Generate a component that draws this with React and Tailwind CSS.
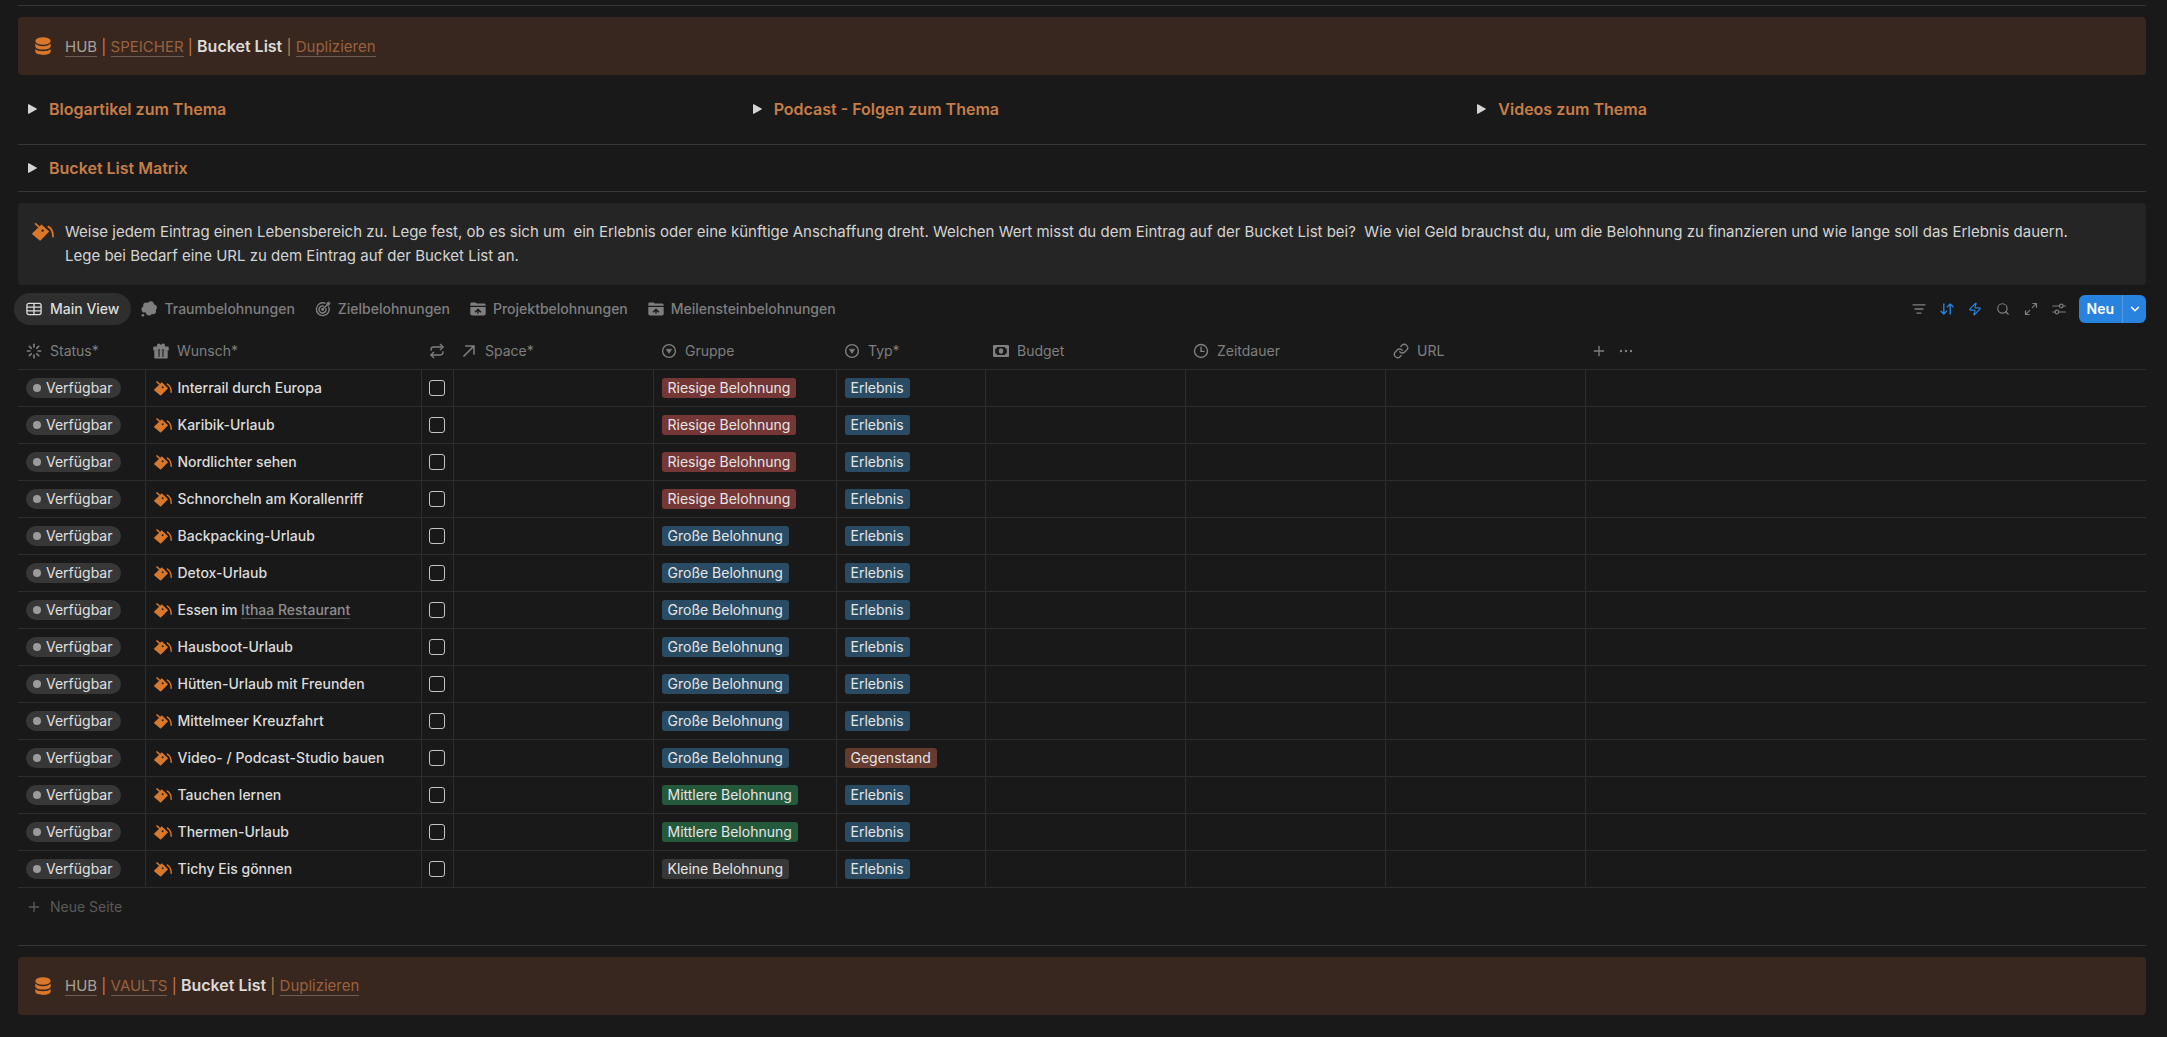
import { Search, Zap, Plus, ChevronDown, Repeat, Link, Loader } from 'lucide-react';

const groupColors = {
  'Riesige Belohnung': 'bg-[#743736]',
  'Große Belohnung': 'bg-[#294c64]',
  'Mittlere Belohnung': 'bg-[#25593c]',
  'Kleine Belohnung': 'bg-[#373737]',
};

const typeColors = {
  Erlebnis: 'bg-[#294c64]',
  Gegenstand: 'bg-[#643b2e]',
};

const wishes = [
  { name: 'Interrail durch Europa', group: 'Riesige Belohnung', type: 'Erlebnis' },
  { name: 'Karibik-Urlaub', group: 'Riesige Belohnung', type: 'Erlebnis' },
  { name: 'Nordlichter sehen', group: 'Riesige Belohnung', type: 'Erlebnis' },
  { name: 'Schnorcheln am Korallenriff', group: 'Riesige Belohnung', type: 'Erlebnis' },
  { name: 'Backpacking-Urlaub', group: 'Große Belohnung', type: 'Erlebnis' },
  { name: 'Detox-Urlaub', group: 'Große Belohnung', type: 'Erlebnis' },
  { name: 'Essen im ', link: 'Ithaa Restaurant', group: 'Große Belohnung', type: 'Erlebnis' },
  { name: 'Hausboot-Urlaub', group: 'Große Belohnung', type: 'Erlebnis' },
  { name: 'Hütten-Urlaub mit Freunden', group: 'Große Belohnung', type: 'Erlebnis' },
  { name: 'Mittelmeer Kreuzfahrt', group: 'Große Belohnung', type: 'Erlebnis' },
  { name: 'Video- / Podcast-Studio bauen', group: 'Große Belohnung', type: 'Gegenstand' },
  { name: 'Tauchen lernen', group: 'Mittlere Belohnung', type: 'Erlebnis' },
  { name: 'Thermen-Urlaub', group: 'Mittlere Belohnung', type: 'Erlebnis' },
  { name: 'Tichy Eis gönnen', group: 'Kleine Belohnung', type: 'Erlebnis' },
];

function DatabaseIcon() {
  return (
    <svg viewBox="0 0 16 18" className="w-4 h-[18px] shrink-0" fill="#d9772b" aria-hidden="true">
      <ellipse cx="8" cy="4" rx="7.7" ry="3.8" />
      <path d="M.3 6.6C1.6 8.3 4.6 9.2 8 9.2s6.4-.9 7.7-2.6v2.6c0 1.9-3.4 3.4-7.7 3.4S.3 11.1.3 9.2z" />
      <path d="M.3 12C1.6 13.7 4.6 14.2 8 14.2s6.4-.5 7.7-2.2v2.6c0 1.9-3.4 3.4-7.7 3.4S.3 16.5.3 14.6z" />
    </svg>
  );
}

function BucketIcon({ className }) {
  return (
    <svg viewBox="0 0 22 18" className={className} fill="none" aria-hidden="true">
      <path d="M9.5 1.4 17.2 8.6 8.8 17.3a1 1 0 0 1-1.4 0L.5 11.4a1 1 0 0 1 0-1.4z" fill="#d9772b" />
      <path d="M3.6.9 6.6 3.6M16.4 3.6c2.8 1.6 4.6 5 4.6 10" stroke="#d9772b" strokeWidth="1.8" strokeLinecap="round" />
      <circle cx="10.6" cy="7.6" r="1.2" fill="#222" />
    </svg>
  );
}

function TableIcon() {
  return (
    <svg viewBox="0 0 16 16" className="size-4" fill="none" stroke="currentColor" strokeWidth="1.3" aria-hidden="true">
      <rect x=".9" y="2.4" width="14.2" height="11.2" rx="2" />
      <path d="M1 6.100h14M1 9.900h14M8 2.500v11" />
    </svg>
  );
}

function ThoughtIcon() {
  return (
    <svg viewBox="0 0 16 16" className="size-4" fill="currentColor" aria-hidden="true">
      <circle cx="8.6" cy="7" r="5.2" />
      <circle cx="5.2" cy="4.4" r="3" />
      <circle cx="9.8" cy="3.3" r="3" />
      <circle cx="12.8" cy="6.6" r="3" />
      <circle cx="12" cy="10.2" r="3" />
      <circle cx="8" cy="11.4" r="3" />
      <circle cx="3.6" cy="8.4" r="3.1" />
      <circle cx="1.9" cy="14.3" r="1.3" />
    </svg>
  );
}

function TargetIcon() {
  return (
    <svg viewBox="0 0 16 16" className="size-4" fill="none" stroke="currentColor" strokeWidth="1.4" strokeLinecap="round" aria-hidden="true">
      <path d="M10 2.200A6.400 6.400 0 1 0 13.800 6" />
      <path d="M8.400 5.100A3.500 3.500 0 1 0 10.900 7.600" />
      <path d="M7.500 8.500 12.300 3.700" />
      <circle cx="7.500" cy="8.500" r=".7" fill="currentColor" />
      <path d="M12 4V2L14 .8v1.200h1.200L14 4z" fill="currentColor" strokeWidth=".8" strokeLinejoin="round" />
    </svg>
  );
}

function FolderIcon() {
  return (
    <svg viewBox="0 0 16 16" className="size-4" aria-hidden="true">
      <path d="M.3 4.800V3c0-1 .6-1.600 1.600-1.600h3.200c.5 0 .8.200 1.100.5l.6.600h7.200c1 0 1.700.6 1.700 1.600v.7z" fill="currentColor" />
      <path d="M.3 6h15.400v6.600c0 1.200-.7 1.900-1.900 1.900H2.200C1 14.500.3 13.800.3 12.600z" fill="currentColor" />
      <path d="M5 11.300 8 8.400l3 2.900M8 9.500v3.200" fill="none" stroke="#191919" strokeWidth="1.4" />
    </svg>
  );
}

function GiftIcon() {
  return (
    <svg viewBox="0 0 16 16" className="size-4" fill="currentColor" aria-hidden="true">
      <path d="M1 3.400h3.200C3.600 1.800 4.400.5 5.700.5c1 0 1.800.7 2.300 1.800C8.500 1.200 9.300.5 10.300.5c1.300 0 2.100 1.300 1.500 2.900H15c.4 0 .7.3.7.7v3.300H.3V4.100c0-.4.3-.7.7-.7z" />
      <path d="M1.300 7.300h13.400v7.300c0 .6-.4 1-1 1H2.300c-.6 0-1-.4-1-1z" />
      <path d="M6 6v8M10 6v8" stroke="#191919" strokeWidth="1.1" />
    </svg>
  );
}

function ArrowIcon() {
  return (
    <svg viewBox="0 0 16 16" className="size-4" fill="none" stroke="currentColor" strokeWidth="1.5" aria-hidden="true">
      <path d="M2.500 13.500 12.600 3.400M4.200 3h8.800v8.800" />
    </svg>
  );
}

function SelectIcon() {
  return (
    <svg viewBox="0 0 16 16" className="size-4" fill="none" aria-hidden="true">
      <circle cx="8" cy="8" r="6.4" stroke="currentColor" strokeWidth="1.4" />
      <path d="M5.300 6.200h5.400L8 10.400z" fill="currentColor" stroke="currentColor" strokeWidth=".6" strokeLinejoin="round" />
    </svg>
  );
}

function MoneyIcon() {
  return (
    <svg viewBox="0 0 16 16" className="size-4" aria-hidden="true">
      <rect x="0" y="2" width="16" height="12" rx="1" fill="currentColor" />
      <path d="M4 4h8c0 1 .8 1.800 1.800 1.800v4.400c-1 0-1.800.8-1.800 1.800H4c0-1-.8-1.800-1.800-1.800V5.800C3.200 5.800 4 5 4 4z" fill="#191919" />
      <ellipse cx="8" cy="8" rx="2.2" ry="2.7" fill="currentColor" />
    </svg>
  );
}

function ClockIcon() {
  return (
    <svg viewBox="0 0 16 16" className="size-4" fill="none" stroke="currentColor" strokeWidth="1.4" strokeLinecap="round" aria-hidden="true">
      <circle cx="8" cy="8" r="6.5" />
      <path d="M8 4.300V8.400h3" />
    </svg>
  );
}

function FilterIcon() {
  return (
    <svg viewBox="0 0 16 16" className="size-4" fill="none" stroke="currentColor" strokeWidth="1.3" strokeLinecap="round" aria-hidden="true">
      <path d="M2 3.800h12M4 8h8M6 12.200h4" />
    </svg>
  );
}

function SortIcon() {
  return (
    <svg viewBox="0 0 16 16" className="size-4" fill="none" stroke="currentColor" strokeWidth="1.4" strokeLinecap="round" strokeLinejoin="round" aria-hidden="true">
      <path d="M4.800 3v10M2 10.300 4.800 13l2.800-2.700M11.200 13V3M8.400 5.700 11.200 3 14 5.700" />
    </svg>
  );
}

function ExpandIcon() {
  return (
    <svg viewBox="0 0 16 16" className="size-4" fill="none" stroke="currentColor" strokeWidth="1.2" strokeLinecap="round" strokeLinejoin="round" aria-hidden="true">
      <path d="M9.300 6.700 13.400 2.600M9.800 2.500h3.700v3.700M6.700 9.300l-4.100 4.100M2.500 9.800v3.700h3.700" />
    </svg>
  );
}

function SlidersIcon() {
  return (
    <svg viewBox="0 0 16 16" className="size-4" fill="none" stroke="currentColor" strokeWidth="1.2" strokeLinecap="round" aria-hidden="true">
      <path d="M1.800 5h6.600M12.200 5h2.200M1.800 11h2.200M7.800 11h6.600" />
      <circle cx="10.3" cy="5" r="1.8" />
      <circle cx="5.9" cy="11" r="1.8" />
    </svg>
  );
}

function Divider() {
  return <hr className="border-t border-[#373737]" />;
}

function Breadcrumb({ section }) {
  return (
    <nav className="my-[11px] flex h-[58px] items-center rounded bg-[#38271f] pl-[17px] text-[15px] leading-6 text-[#c77d48]">
      <DatabaseIcon />
      <p className="ml-[14px]">
        <a href="#hub" className="border-b border-[#6b5d56] text-[#a8a19d]">HUB</a>
        {' | '}
        <a href="#section" className="border-b border-[#6b5d56] text-[#99613c]">{section}</a>
        {' | '}
        <strong className="text-base font-semibold text-[#dedad7]">Bucket List</strong>
        {' | '}
        <a href="#duplizieren" className="border-b border-[#6b5d56] text-[#99613c]">Duplizieren</a>
      </p>
    </nav>
  );
}

function Toggle({ title }) {
  return (
    <button type="button" className="flex h-[30px] items-center gap-3 pl-[10px] text-base font-semibold text-[#c77d48]">
      <svg viewBox="0 0 9 10" className="w-[9px] h-[10px]" fill="#d4d4d4" aria-hidden="true">
        <path d="M0 .8v8.400c0 .5.400.8.900.5l7.600-4.200a.6.600 0 0 0 0-1L.9.300C.4 0 0 .3 0 .8z" />
      </svg>
      {title}
    </button>
  );
}

function Tab({ icon, label, active }) {
  return (
    <button
      type="button"
      className={`flex h-8 items-center rounded-full text-sm font-medium ${
        active ? 'gap-2 px-3 bg-[#2e2e2e] text-[#dcdcdc]' : 'gap-[7px] px-[10px] text-[#7f7f7f]'
      }`}
    >
      {icon}
      {label}
    </button>
  );
}

function ToolButton({ icon, label, active }) {
  return (
    <button
      type="button"
      aria-label={label}
      className={`flex size-7 items-center justify-center ${active ? 'text-[#2783de]' : 'text-[#7f7f7f]'}`}
    >
      {icon}
    </button>
  );
}

function HeaderCell({ icon, label }) {
  return (
    <th scope="col" className="p-0 pl-2 text-left font-normal">
      <span className="flex items-center gap-2">
        {icon}
        {label}
      </span>
    </th>
  );
}

function Tag({ color, children }) {
  return <span className={`flex h-5 w-fit items-center rounded-[3px] px-[6px] text-[#e6e6e6] ${color}`}>{children}</span>;
}

function WishRow({ wish }) {
  return (
    <tr className="h-[37px] border-b border-[#2d2d2d]">
      <td className="border-r border-[#2d2d2d] p-0 pl-2">
        <span className="flex h-5 w-fit items-center gap-[5px] rounded-full bg-[#373737] pl-[7px] pr-2 text-[#e0e0e0]">
          <span className="size-2 rounded-full bg-[#9b9b9b]" />
          Verfügbar
        </span>
      </td>
      <td className="border-r border-[#2d2d2d] p-0 pl-2">
        <span className="flex items-center gap-[6px] pt-px font-medium text-[#dcdcdc]">
          <BucketIcon className="w-[18px] h-[15px] shrink-0" />
          <span className="whitespace-pre">
            {wish.name}
            {wish.link && (
              <a href="#ithaa" className="border-b border-[#4c4c4c] text-[#8f8f8f]">{wish.link}</a>
            )}
          </span>
        </span>
      </td>
      <td className="border-r border-[#2d2d2d] p-0">
        <input
          type="checkbox"
          aria-label={`${wish.name} wiederholen`}
          className="mx-auto block size-4 appearance-none rounded-[3px] border border-[#c4c4c4]"
        />
      </td>
      <td className="border-r border-[#2d2d2d]" />
      <td className="border-r border-[#2d2d2d] p-0 pl-2">
        <Tag color={groupColors[wish.group]}>{wish.group}</Tag>
      </td>
      <td className="border-r border-[#2d2d2d] p-0 pl-2">
        <Tag color={typeColors[wish.type]}>{wish.type}</Tag>
      </td>
      <td className="border-r border-[#2d2d2d]" />
      <td className="border-r border-[#2d2d2d]" />
      <td className="border-r border-[#2d2d2d]" />
      <td />
    </tr>
  );
}

export default function App() {
  return (
    <div className="min-h-screen bg-[#191919] pt-[5px] pl-[18px] pr-[21px] font-['Inter',sans-serif] text-[#d4d4d4]">
      <Divider />
      <Breadcrumb section="SPEICHER" />

      <div className="grid grid-cols-3 gap-[46px] pt-2 pb-5">
        <Toggle title="Blogartikel zum Thema" />
        <Toggle title="Podcast - Folgen zum Thema" />
        <Toggle title="Videos zum Thema" />
      </div>
      <Divider />
      <div className="py-2">
        <Toggle title="Bucket List Matrix" />
      </div>
      <Divider />

      <section className="mt-[11px] flex gap-[11px] rounded bg-[#252525] py-[17px] pl-[14px] pr-4">
        <BucketIcon className="mt-[3px] w-[22px] h-[18px] shrink-0" />
        <p className="text-[15px] leading-6">
          Weise jedem Eintrag einen Lebensbereich zu. Lege fest, ob es sich um&nbsp; ein Erlebnis oder eine künftige Anschaffung dreht. Welchen Wert misst du dem Eintrag auf der Bucket List bei?&nbsp; Wie viel Geld brauchst du, um die Belohnung zu finanzieren und wie lange soll das Erlebnis dauern.
          <br />
          Lege bei Bedarf eine URL zu dem Eintrag auf der Bucket List an.
        </p>
      </section>

      <div className="mt-2 -ml-1 flex items-center justify-between">
        <div className="flex">
          <Tab active icon={<TableIcon />} label="Main View" />
          <Tab icon={<ThoughtIcon />} label="Traumbelohnungen" />
          <Tab icon={<TargetIcon />} label="Zielbelohnungen" />
          <Tab icon={<FolderIcon />} label="Projektbelohnungen" />
          <Tab icon={<FolderIcon />} label="Meilensteinbelohnungen" />
        </div>
        <div className="flex items-center">
          <ToolButton icon={<FilterIcon />} label="Filtern" />
          <ToolButton active icon={<SortIcon />} label="Sortieren" />
          <ToolButton active icon={<Zap className="size-[14px]" />} label="Automatisierungen" />
          <ToolButton icon={<Search className="size-[14px]" />} label="Suchen" />
          <ToolButton icon={<ExpandIcon />} label="Vollbild" />
          <ToolButton icon={<SlidersIcon />} label="Einstellungen" />
          <div className="ml-[6px] flex h-7 overflow-hidden rounded-md bg-[#2783de] text-sm font-semibold text-white">
            <button type="button" className="px-2">Neu</button>
            <button type="button" aria-label="Vorlagen" className="flex w-6 items-center justify-center border-l border-[#5299e0]">
              <ChevronDown className="size-[14px]" strokeWidth={2.5} />
            </button>
          </div>
        </div>
      </div>

      <table className="mt-2 w-full table-fixed border-collapse text-sm">
        <colgroup>
          <col className="w-[127px]" />
          <col className="w-[276px]" />
          <col className="w-8" />
          <col className="w-[200px]" />
          <col className="w-[183px]" />
          <col className="w-[149px]" />
          <col className="w-[200px]" />
          <col className="w-[200px]" />
          <col className="w-[200px]" />
          <col />
        </colgroup>
        <thead>
          <tr className="h-9 border-b border-[#2d2d2d] text-[#7f7f7f]">
            <HeaderCell icon={<Loader className="size-4" strokeWidth={2.5} />} label="Status*" />
            <HeaderCell icon={<GiftIcon />} label="Wunsch*" />
            <HeaderCell icon={<Repeat className="size-4" aria-label="Wiederholen" />} />
            <HeaderCell icon={<ArrowIcon />} label="Space*" />
            <HeaderCell icon={<SelectIcon />} label="Gruppe" />
            <HeaderCell icon={<SelectIcon />} label="Typ*" />
            <HeaderCell icon={<MoneyIcon />} label="Budget" />
            <HeaderCell icon={<ClockIcon />} label="Zeitdauer" />
            <HeaderCell icon={<Link className="size-4" />} label="URL" />
            <th className="p-0 pl-[6px]">
              <span className="flex items-center gap-3">
                <button type="button" aria-label="Eigenschaft hinzufügen"><Plus className="size-4" /></button>
                <button type="button" aria-label="Mehr">
                  <svg viewBox="0 0 14 14" className="size-[14px]" fill="currentColor" aria-hidden="true">
                    <circle cx="2" cy="7" r="1.2" />
                    <circle cx="7" cy="7" r="1.2" />
                    <circle cx="12" cy="7" r="1.2" />
                  </svg>
                </button>
              </span>
            </th>
          </tr>
        </thead>
        <tbody>
          {wishes.map((wish) => (
            <WishRow key={wish.name} wish={wish} />
          ))}
        </tbody>
      </table>
      <button type="button" className="mb-[19px] flex h-[38px] items-center gap-2 pl-2 text-sm text-[#5a5a5a]">
        <Plus className="size-4" />
        Neue Seite
      </button>

      <Divider />
      <Breadcrumb section="VAULTS" />
    </div>
  );
}
